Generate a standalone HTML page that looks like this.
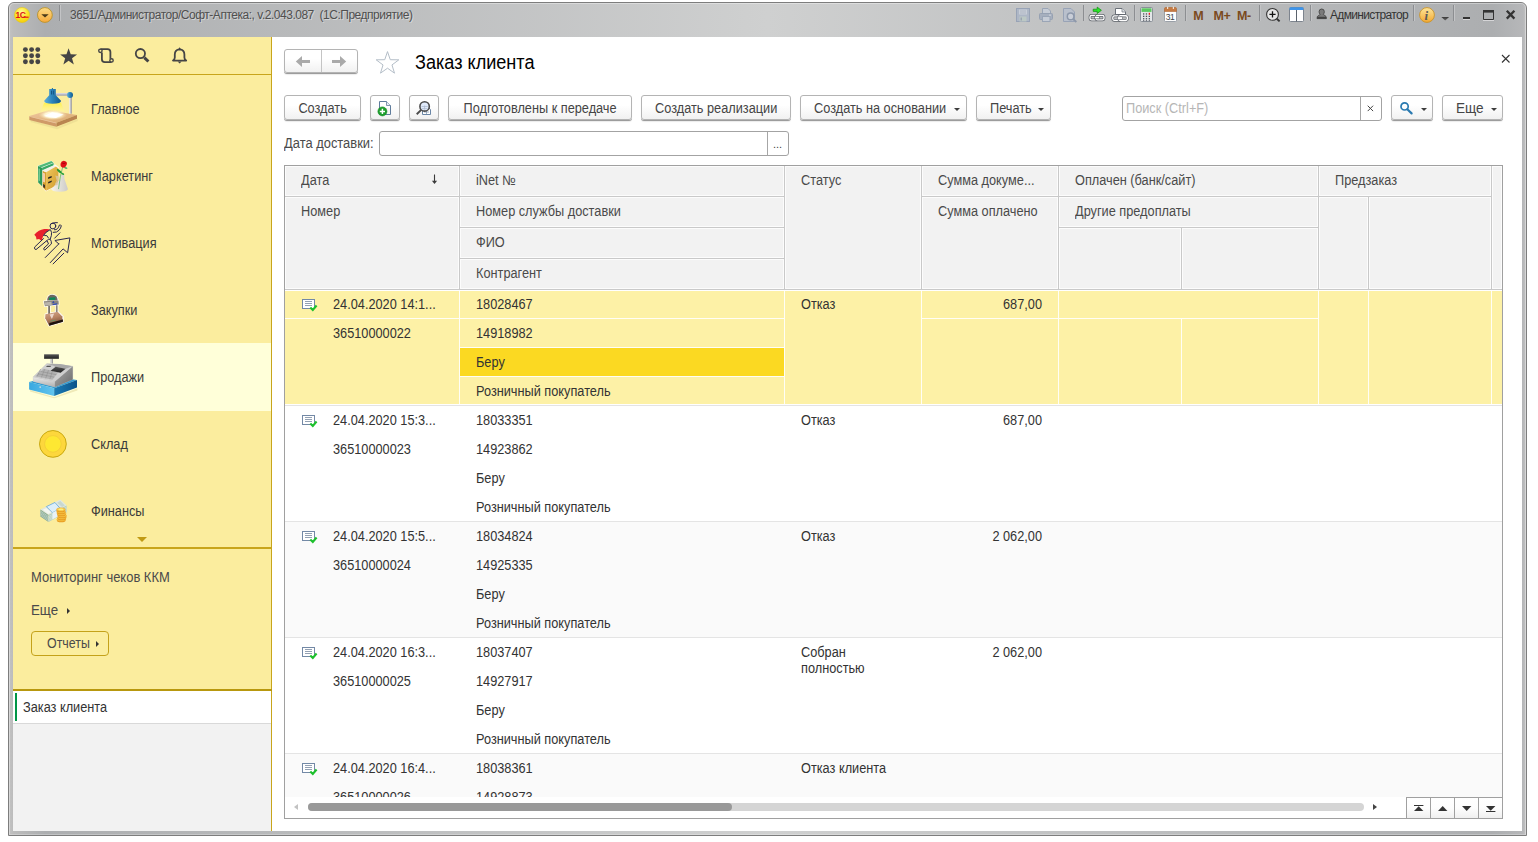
<!DOCTYPE html>
<html lang="ru">
<head>
<meta charset="utf-8">
<title>Заказ клиента</title>
<style>
*{box-sizing:border-box}
html,body{margin:0;padding:0}
body{width:1538px;height:842px;background:#fff;position:relative;overflow:hidden;font-family:"Liberation Sans",sans-serif;font-size:14px;color:#333;letter-spacing:0}
.abs{position:absolute}
#win{position:absolute;left:8px;top:2px;width:1519px;height:834px;border:1px solid #7d7d7d;border-radius:6px 6px 0 0;background:linear-gradient(90deg,#c3c3c3 0,#bcbcbc 4px,#acaeb0 36px,#cfd0d0 50%,#acaeb0 1484px,#b6b7b9 1514px,#c3c3c3 100%)}
#win:before{content:"";position:absolute;left:0;top:0;right:0;bottom:0;border:1px solid rgba(255,255,255,.35);border-radius:5px 5px 0 0;border-bottom-color:rgba(255,255,255,.25)}
#title{position:absolute;left:70px;top:8px;font-size:12px;letter-spacing:-0.48px;color:#4f4f4f;white-space:pre;text-shadow:1px 1px 0 rgba(255,255,255,.4)}
#content{position:absolute;left:13px;top:37px;width:1509px;height:794px;background:#fff}
#main{position:absolute;left:0;top:0;width:1538px;height:842px}
.tri{position:absolute;width:0;height:0;border-top:3px solid transparent;border-bottom:3px solid transparent;border-left:3px solid #333}
/* sidebar */
#side{position:absolute;left:0;top:0;width:259px;height:794px;background:#fbed9e;border-right:1px solid #c8a51b}
#side .hl{position:absolute;left:0;width:258px;height:1px;background:#c8a51b}
.sec{position:absolute;left:0;width:258px;height:67px}
.sec span{position:absolute;left:78px;top:26px;color:#3a3a3a;white-space:nowrap;transform:scaleX(.91);transform-origin:0 0}
.sec.act{background:#ffffd9;height:68px}
.cmd{position:absolute;left:18px;color:#4a4a4a;white-space:nowrap}
.t{position:absolute;white-space:nowrap;transform:scaleX(.91);transform-origin:0 0}
.bt{display:inline-block;transform:scaleX(.91);transform-origin:50% 0}
.bl{display:inline-block;transform:scaleX(.91);transform-origin:0 0}
/* main */
.btn{position:absolute;top:95px;height:25px;border:1px solid #b4b4b4;border-radius:3px;background:linear-gradient(#fff 0,#fff 40%,#f1f1f1 100%);box-shadow:0 1px 0 #9c9c9c,0 2px 1px rgba(0,0,0,.08);color:#454545;text-align:center;line-height:25px;white-space:nowrap;padding:0}
.dd{position:absolute;width:0;height:0;border-left:3px solid transparent;border-right:3px solid transparent;border-top:3px solid #3c3c3c}
.inp{position:absolute;height:25px;border:1px solid #a3a3a3;border-radius:3px;background:#fff}
.hc{position:absolute;background:#f2f2f2;box-shadow:inset 0 0 0 1px #fcfcfc;color:#4a4a4a;white-space:nowrap;overflow:hidden}
.hc span{position:absolute;left:16px;top:6px;transform:scaleX(.91);transform-origin:0 0}
.dt{position:absolute;color:#333;white-space:nowrap;transform:scaleX(.91);transform-origin:0 0}
</style>
</head>
<body>
<div id="win"></div>
<div id="title">3651/Администратор/Софт-Аптека:, v.2.043.087  (1С:Предприятие)</div>
<!--TIS--><svg class="abs" style="left:0;top:0" width="1538" height="37" viewBox="0 0 1538 37"><defs>
<radialGradient id="t1" cx="0.45" cy="0.3" r="0.8"><stop offset="0" stop-color="#fffb9a"/><stop offset="0.5" stop-color="#fce42a"/><stop offset="1" stop-color="#f2c400"/></radialGradient>
<linearGradient id="t2" x1="0" y1="0" x2="0" y2="1"><stop offset="0" stop-color="#fddc86"/><stop offset="1" stop-color="#f7a93a"/></linearGradient>
<linearGradient id="t3" x1="0" y1="0" x2="0" y2="1"><stop offset="0" stop-color="#fde69a"/><stop offset="1" stop-color="#f2a832"/></linearGradient>
<linearGradient id="t4" x1="0" y1="0" x2="0" y2="1"><stop offset="0" stop-color="#3a3a3a"/><stop offset="1" stop-color="#6a6a6a"/></linearGradient>
</defs>
<circle cx="22.1" cy="15" r="7.6" fill="url(#t1)" stroke="#e8c800" stroke-width="0.5"/>
<text x="15.6" y="18.2" font-family="Liberation Sans,sans-serif" font-weight="bold" font-size="8.5" fill="#e0101a" letter-spacing="-0.6">1С</text>
<path d="M23.6 17.2H28.6" stroke="#e0101a" stroke-width="1.1"/>
<circle cx="44.9" cy="15" r="7.4" fill="url(#t2)" stroke="#b8922c" stroke-width="0.9"/>
<path d="M41.3 14.2H48.7L45 17.6Z" fill="#4a3a1a"/>
<rect x="59" y="5" width="1" height="16" fill="#8c8e91"/><rect x="60" y="5" width="1" height="16" fill="#c3c4c6"/>
<!-- disabled save/print/preview -->
<g opacity="1"><rect x="1016.5" y="8.500" width="13" height="13" fill="#aeb7c6" stroke="#98a3b6"/><rect x="1019" y="9.5" width="8" height="5" fill="#c8ced8"/><path d="M1020 11H1026M1020 13H1026" stroke="#aab2c0" stroke-width="0.8"/><rect x="1019.5" y="16.5" width="7" height="5" fill="#bcc8c4"/><rect x="1020.5" y="17.5" width="1.5" height="3" fill="#9aa4b2"/>
<path d="M1042.5 13.5V8.5H1048L1050.5 11V13.5" fill="#c6ccd6" stroke="#9aa5b6"/><rect x="1039.500" y="13.5" width="13" height="6" rx="1" fill="#a6afbe" stroke="#96a1b2"/><rect x="1042.5" y="16.5" width="7.500" height="5" fill="#c6ccd6" stroke="#9aa5b6"/><rect x="1049" y="14.600" width="2" height="1" fill="#d4d8e0"/>
<path d="M1063.5 8.500H1071L1074.500 12V21.500H1063.500Z" fill="#b9c0cc" stroke="#98a3b6"/><circle cx="1070.6" cy="16.4" r="3.3" fill="#c9ced8" stroke="#8d98aa" stroke-width="1.500"/><path d="M1073 19L1076.4 22" stroke="#8d98aa" stroke-width="1.800"/></g>
<rect x="1083" y="5" width="1" height="16" fill="#8c8e91"/><rect x="1084" y="5" width="1" height="16" fill="#c3c4c6"/>
<!-- link with arrow -->
<g><rect x="1090" y="15.400" width="8" height="4.400" rx="1.600" fill="none" stroke="#5c6168" stroke-width="2.700"/><rect x="1090" y="15.400" width="8" height="4.400" rx="1.600" fill="none" stroke="#fff" stroke-width="1.300"/><rect x="1096" y="15.400" width="8" height="4.400" rx="1.600" fill="none" stroke="#5c6168" stroke-width="2.700"/><rect x="1096" y="15.400" width="8" height="4.400" rx="1.600" fill="none" stroke="#fff" stroke-width="1.300"/><rect x="1094.500" y="16.400" width="5" height="2.400" fill="#fff" stroke="#5c6168" stroke-width="0.600"/>
<path d="M1093.200 9.200H1097.200V7.100L1101.400 10.300L1097.200 13.500V11.400H1093.200Z" fill="#2ae82a" stroke="#0c8c0c" stroke-width="0.700"/></g>
<g><path d="M1115.500 14.500V8.500H1122L1125.500 12V14.500Z" fill="#fff" stroke="#6a7078"/><path d="M1122 8.500V12H1125.500" fill="#dfe3e8" stroke="#6a7078" stroke-width="0.700"/><rect x="1112.800" y="15.800" width="8.500" height="4.600" rx="1.600" fill="none" stroke="#5c6168" stroke-width="2.700"/><rect x="1112.800" y="15.800" width="8.500" height="4.600" rx="1.600" fill="none" stroke="#fff" stroke-width="1.300"/><rect x="1118.800" y="15.800" width="8.500" height="4.600" rx="1.600" fill="none" stroke="#5c6168" stroke-width="2.700"/><rect x="1118.800" y="15.800" width="8.500" height="4.600" rx="1.600" fill="none" stroke="#fff" stroke-width="1.500"/><rect x="1117.500" y="16.800" width="5" height="2.600" fill="#fff" stroke="#70757c" stroke-width="0.600"/></g>
<rect x="1134" y="5" width="1" height="16" fill="#8c8e91"/><rect x="1135" y="5" width="1" height="16" fill="#c3c4c6"/>
<!-- calculator -->
<rect x="1140.500" y="7.500" width="12" height="14" rx="1" fill="#e4e6e8" stroke="#8a9098"/><rect x="1141.500" y="8.300" width="10" height="3.600" fill="#5cc860"/><g fill="#4a4e58"><rect x="1143" y="13.300" width="1.300" height="1.300"/><rect x="1145.800" y="13.300" width="1.300" height="1.300"/><rect x="1143" y="15.700" width="1.300" height="1.300"/><rect x="1145.800" y="15.700" width="1.300" height="1.300"/><rect x="1148.700" y="15.700" width="1.300" height="1.300"/><rect x="1143" y="18.100" width="1.300" height="1.300"/><rect x="1145.800" y="18.100" width="1.300" height="1.300"/><rect x="1148.700" y="18.100" width="1.300" height="1.300"/><rect x="1143" y="20.300" width="1.300" height="0.800"/><rect x="1145.800" y="20.300" width="1.300" height="0.800"/><rect x="1148.700" y="20.300" width="1.300" height="0.800"/></g><rect x="1148.700" y="12.800" width="1.300" height="2" fill="#e82020"/>
<!-- calendar -->
<rect x="1164.500" y="8" width="12" height="13.500" rx="1" fill="#fdfdfd" stroke="#9aa0a8"/><path d="M1164.500 11.500V8.800Q1164.500 7.500 1165.800 7.500H1175.200Q1176.500 7.500 1176.500 8.800V11.500Z" fill="#c67a42" stroke="#b06a34" stroke-width="0.6"/><rect x="1167" y="6.600" width="1.200" height="2.400" fill="#f0e0d0"/><rect x="1172.800" y="6.600" width="1.200" height="2.400" fill="#f0e0d0"/>
<text x="1165.800" y="19.700" font-family="Liberation Sans,sans-serif" font-size="8.500" fill="#404650" letter-spacing="-0.5">31</text>
<rect x="1185" y="5" width="1" height="16" fill="#8c8e91"/><rect x="1186" y="5" width="1" height="16" fill="#c3c4c6"/>
<g font-family="Liberation Sans,sans-serif" font-weight="bold" font-size="12.500" fill="#7a4a1e" letter-spacing="-0.4"><text x="1193.300" y="19.700">M</text><text x="1213.600" y="19.700">M+</text><text x="1236.900" y="19.700">M-</text></g>
<rect x="1259" y="5" width="1" height="16" fill="#8c8e91"/><rect x="1260" y="5" width="1" height="16" fill="#c3c4c6"/>
<!-- zoom -->
<circle cx="1272.500" cy="14.400" r="5.900" fill="#e6e6e6" stroke="#333" stroke-width="1.100"/><path d="M1269.400 14.400H1275.600M1272.500 11.300V17.500" stroke="#111" stroke-width="1.300"/><path d="M1276.800 18.800L1279.600 21.400" stroke="#333" stroke-width="1.900"/>
<!-- panels -->
<rect x="1289.500" y="7.500" width="14" height="14" rx="1" fill="#fff" stroke="#7d848e"/><path d="M1289.500 10V8.500Q1289.500 7.200 1290.800 7.200H1302.200Q1303.500 7.200 1303.500 8.500V10Z" fill="#3d94ea"/><path d="M1296.500 10V21.500" stroke="#5a626c" stroke-width="1"/>
<rect x="1310" y="5" width="1" height="16" fill="#8c8e91"/><rect x="1311" y="5" width="1" height="16" fill="#c3c4c6"/>
<!-- user -->
<path d="M1321.700 9Q1324.300 9 1324.300 11.700Q1324.300 13.300 1323.300 14.300Q1323.400 15 1324.900 15.500Q1326.400 16 1326.400 18.600H1317Q1317 16 1318.500 15.500Q1320 15 1320.100 14.300Q1319.100 13.300 1319.100 11.700Q1319.100 9 1321.700 9Z" fill="#7a7a7a" stroke="#444" stroke-width="0.900"/><path d="M1317.200 16.800H1326.200V18.600H1317.200Z" fill="#444"/>
<rect x="1413" y="5" width="1" height="16" fill="#8c8e91"/><rect x="1414" y="5" width="1" height="16" fill="#c3c4c6"/>
<circle cx="1427" cy="15" r="7.400" fill="url(#t3)" stroke="#c8922a" stroke-width="0.900"/>
<text x="1424.600" y="19.600" font-family="Liberation Serif,serif" font-style="italic" font-weight="bold" font-size="13" fill="#5a5a5a">i</text>
<path d="M1441.300 17H1449.100L1445.200 20.600Z" fill="url(#t4)"/>
<rect x="1453" y="5" width="1" height="16" fill="#8c8e91"/><rect x="1454" y="5" width="1" height="16" fill="#c3c4c6"/>
<rect x="1463" y="17" width="7" height="2" fill="#333"/><rect x="1463" y="19" width="7" height="1" fill="#d6d6d8"/>
<path d="M1483.500 11.500H1493.500V19.500H1483.500Z" fill="none" stroke="#333" stroke-width="1"/><rect x="1483" y="10" width="11" height="2.600" fill="#333"/><rect x="1483" y="20" width="11" height="1" fill="#d6d6d8"/>
<path d="M1506.800 10.700L1514.400 18.600M1514.400 10.700L1506.800 18.600" stroke="#333" stroke-width="2.300"/>
</svg>
<div class="abs" style="left:1330px;top:8px;font-size:12px;letter-spacing:-0.66px;color:#333;white-space:nowrap">Администратор</div><!--TIE-->
<div id="content">
<div id="side">
<svg class="abs" style="left:0;top:0" width="258" height="37" viewBox="13 37 258 37"><g fill="#454545"><circle cx="25.4" cy="49.6" r="2.45"/><circle cx="31.6" cy="49.6" r="2.45"/><circle cx="37.8" cy="49.6" r="2.45"/><circle cx="25.4" cy="55.7" r="2.45"/><circle cx="31.6" cy="55.7" r="2.45"/><circle cx="37.8" cy="55.7" r="2.45"/><circle cx="25.4" cy="61.8" r="2.45"/><circle cx="31.6" cy="61.8" r="2.45"/><circle cx="37.8" cy="61.8" r="2.45"/><path d="M68.60 48.30L70.72 54.29L77.06 54.45L72.02 58.31L73.83 64.40L68.60 60.80L63.37 64.40L65.18 58.31L60.14 54.45L66.48 54.29Z"/></g>
<g fill="none" stroke="#454545" stroke-width="1.8"><path d="M100.400 49.100H107.500Q110.400 49.100 110.400 52V58.700"/><path d="M111.500 62.100H104.800Q101.900 62.100 101.900 59.200V52.500"/><circle cx="100.400" cy="50.800" r="1.700" stroke-width="1.400"/><circle cx="111.500" cy="60.400" r="1.700" stroke-width="1.400"/>
<circle cx="140.4" cy="53.6" r="4.6"/><path d="M144.3 57.6L148.4 61.5" stroke-width="3"/>
<path d="M173 60.6H186.2Q184.4 59.6 184.4 57.5V54.6Q184.4 49.6 179.6 49.3Q174.8 49.6 174.8 54.6V57.5Q174.8 59.6 173 60.6Z" stroke-linejoin="round"/></g>
<path d="M178.2 49.2L179.6 47.3L181 49.2ZM177.6 61.6H181.6L179.6 63.6Z" fill="#454545"/></svg>
<div class="hl" style="top:37px"></div>
<div class="sec" style="top:38px"><!--IC0S--><svg class="abs" style="left:7px;top:5px" width="70" height="60" viewBox="20 80 70 60"><defs>
<linearGradient id="l0a" x1="0" y1="0" x2="1" y2="0"><stop offset="0" stop-color="#5fb0dc"/><stop offset="0.45" stop-color="#2d86bd"/><stop offset="1" stop-color="#125a8c"/></linearGradient>
<linearGradient id="l0b" x1="0" y1="0" x2="1" y2="0"><stop offset="0" stop-color="#f4f4f8"/><stop offset="1" stop-color="#8e8e98"/></linearGradient>
<linearGradient id="l0c" x1="0" y1="0" x2="1" y2="1"><stop offset="0" stop-color="#f0c8a0"/><stop offset="1" stop-color="#d8a86c"/></linearGradient>
<radialGradient id="l0d" cx="0.5" cy="0.5" r="0.5"><stop offset="0" stop-color="#fff"/><stop offset="0.55" stop-color="#fff8d8"/><stop offset="1" stop-color="#f4d8a0" stop-opacity="0"/></radialGradient>
<linearGradient id="l0e" x1="0" y1="0" x2="0" y2="1"><stop offset="0" stop-color="#fff04a"/><stop offset="1" stop-color="#fff7a0" stop-opacity="0.5"/></linearGradient></defs>
<polygon points="30.7,119.9 57.1,127.0 77.7,118.8 77.7,121.0 57.1,129.2 30.7,122.1" fill="#e8d890" opacity="0.6"/>
<polygon points="29.3,116.0 48.9,110.3 77.0,114.9 56.4,122.8" fill="url(#l0c)"/>
<polygon points="29.3,116.0 56.4,122.8 56.4,126.7 29.3,119.9" fill="#cf9a68"/>
<polygon points="56.4,122.8 77.0,114.9 77.0,118.8 56.4,126.7" fill="#b98550"/>
<polygon points="29.3,116.0 56.4,122.8 56.4,123.6 29.3,116.8" fill="#edc8a4"/>
<polygon points="44.2,102.7 61.0,102.7 64.5,111.7 40.5,111.7" fill="url(#l0e)"/>
<ellipse cx="52.8" cy="114.9" rx="14.5" ry="5.2" fill="url(#l0d)"/>
<polygon points="44.2,116.0 52.1,112.2 63.6,114.4 55.6,118.1" fill="#fff"/>
<rect x="69.2" y="97.1" width="2.6" height="16.6" fill="url(#l0b)"/>
<rect x="55.6" y="93.0" width="13.6" height="2.4" fill="#d4d4dc"/>
<rect x="55.6" y="94.6" width="13.6" height="0.9" fill="#9090a0"/>
<circle cx="70.0" cy="95.0" r="3" fill="url(#l0a)"/>
<path d="M49.2 89.1H55.8V95.3L61.0 100.7Q61.3 103.5 52.6 103.7Q43.9 103.5 44.2 100.7L49.2 95.3Z" fill="url(#l0a)"/>
<rect x="51.1" y="90.7" width="0.8" height="3.8" fill="#0d4a78"/><rect x="52.9" y="90.7" width="0.8" height="3.8" fill="#0d4a78"/>
<rect x="51.9" y="88.0" width="1" height="1.4" fill="#1a6aa0"/>
</svg><!--IC0E--><span>Главное</span></div>
<div class="sec" style="top:105px"><!--IC1S--><svg class="abs" style="left:7px;top:5px" width="70" height="60" viewBox="20 147 70 60"><defs>
<linearGradient id="l1a" x1="0" y1="0" x2="1" y2="1"><stop offset="0" stop-color="#f0c860"/><stop offset="1" stop-color="#d09a28"/></linearGradient>
<linearGradient id="l1b" x1="0" y1="0" x2="1" y2="0"><stop offset="0" stop-color="#f6f6fa" stop-opacity="0.8"/><stop offset="1" stop-color="#c4c4d0" stop-opacity="0.85"/></linearGradient></defs>
<polygon points="37.7,165.7 51.4,160.7 54.1,163.0 54.1,176.9 42.1,186.6 38.0,182.6" fill="#fff" opacity="0.9"/>
<polygon points="38.0,166.1 42.1,167.8 42.1,186.3 38.2,182.5" fill="#2e9a58"/>
<polygon points="38.0,166.1 51.4,161.1 53.6,163.1 42.1,167.8" fill="#4fba78"/>
<polygon points="41.4,167.3 52.4,163.0 52.9,163.8 42.1,168.1" fill="#f0f4f0"/>
<polygon points="42.1,167.8 53.6,163.1 53.6,176.9 42.1,186.3" fill="#38a864"/>
<polygon points="38.7,168.4 39.7,168.8 39.7,181.2 38.7,180.5" fill="#8fdca8"/>
<polygon points="42.2,170.2 55.3,164.5 58.8,167.3 58.8,184.8 45.8,191.5 42.2,187.8" fill="#fff" opacity="0.9"/>
<polygon points="42.7,170.7 46.1,172.2 46.1,190.8 42.7,187.5" fill="#d8a030"/>
<polygon points="42.7,170.7 54.9,165.2 56.0,166.4 46.1,172.2" fill="#f4f0e4"/>
<polygon points="46.1,172.2 56.0,166.4 58.5,168.4 58.5,184.4 46.1,190.8" fill="url(#l1a)"/>
<polygon points="43.2,172.8 44.8,173.5 44.8,182.6 43.2,181.8" fill="#fbd8c8"/>
<polygon points="43.2,184.1 44.9,184.9 44.9,188.3 43.2,187.1" fill="#2a2a2a"/>
<polygon points="48.2,177.3 51.7,175.9 51.7,177.5 48.2,178.9" fill="#222"/>
<polygon points="48.2,181.9 51.7,180.5 51.7,182.1 48.2,183.6" fill="#222"/>
<path d="M60.8 174.7H64.3V178.4L67.9 189.1Q67.9 191.5 59.9 191.8Q51.1 191.5 51.4 189.1L60.8 178.4Z" fill="url(#l1b)"/>
<polygon points="55.3,175.5 58.8,176.2 57.1,185.5 54.9,184.1 56.7,180.5" fill="#d8c8a8" opacity="0.8"/>
<path d="M62.6 167.3L60.3 176.9L58.5 189.1" stroke="#5cb46c" stroke-width="0.8" fill="none"/>
<ellipse cx="59.2" cy="171.1" rx="2.9" ry="1.1" fill="#1f9a30" transform="rotate(38 59.2 171.1)"/>
<ellipse cx="65.6" cy="167.8" rx="2" ry="0.9" fill="#58b868" transform="rotate(20 65.6 167.8)"/>
<ellipse cx="62.6" cy="173.7" rx="1.8" ry="0.8" fill="#2aa040" transform="rotate(30 62.6 173.7)"/>
<path d="M60.6 163.4Q61.3 160.5 64.5 160.9Q67.8 161.6 66.7 164.8Q65.6 168.0 62.8 167.7Q59.9 166.6 60.6 163.4Z" fill="#e01018"/>
<path d="M62.1 163.0Q64.2 164.5 65.6 162.7" stroke="#a00008" stroke-width="0.8" fill="none"/>
</svg><!--IC1E--><span>Маркетинг</span></div>
<div class="sec" style="top:172px"><!--IC2S--><svg class="abs" style="left:7px;top:5px" width="70" height="60" viewBox="20 214 70 60">
<path d="M34.3 234.7Q38.5 230.0 44.2 229.1Q48.2 228.6 50.3 229.5Q44.9 232.5 43.2 236.1Q42.2 238.6 41.7 240.9L39.1 238.9L36.5 239.5L36.0 236.8Z" fill="#e8202c"/>
<g fill="none" stroke="#28264f" stroke-width="1" stroke-linecap="round" stroke-linejoin="round">
<circle cx="52.9" cy="226.0" r="2.9"/>
<path d="M51.4 223.6Q54.2 222.2 57.4 222.6"/>
<path d="M53.2 232.4Q57.1 232.8 59.2 230.1Q60.9 228.0 61.3 225.8Q60.8 224.4 59.3 225.1Q58.9 227.3 57.5 228.7Q56.1 230.0 54.4 229.8"/>
<path d="M50.6 229.8Q52.1 232.5 51.4 235.4L50.3 238.9"/>
<path d="M49.6 230.0Q44.9 232.2 43.5 235.4"/>
<path d="M44.6 235.4Q47.1 234.3 48.5 237.9"/>
<path d="M43.5 238.6L34.6 247.1Q33.9 249.3 36.0 249.6L46.7 240.7"/>
<path d="M46.7 240.7Q48.5 238.6 50.3 239.3Q51.7 241.4 51.4 243.9L44.9 250.0Q43.2 250.0 43.9 248.1L48.5 243.9L47.4 241.4"/>
<path d="M59.9 232.9L54.6 238.2"/>
<path d="M58.8 243.9L45.3 257.5"/>
<path d="M58.8 243.9L54.9 240.5L69.9 237.9L67.6 252.8L63.1 248.9L50.3 262.6"/>
<path d="M63.8 253.2L53.1 263.9"/>
</g></svg><!--IC2E--><span>Мотивация</span></div>
<div class="sec" style="top:239px"><!--IC3S--><svg class="abs" style="left:7px;top:5px" width="70" height="60" viewBox="20 281 70 60"><defs>
<linearGradient id="l3a" x1="0" y1="0" x2="0.3" y2="1"><stop offset="0" stop-color="#d4a88c"/><stop offset="0.5" stop-color="#b98464"/><stop offset="1" stop-color="#7a5038"/></linearGradient></defs>
<g stroke="#fff" stroke-width="1.6" stroke-linejoin="round" fill="#fff" opacity="0.9">
<path d="M47.1 300.4Q47.4 294.7 52.4 294.7Q57.6 294.9 57.6 300.6Z"/>
<polygon points="43.9,301.3 58.5,300.4 58.8,304.5 44.9,306.3"/>
<rect x="48.2" y="305.9" width="1.8" height="9" />
<rect x="55.9" y="305.2" width="1.7" height="8"/>
<polygon points="45.4,314.2 58.1,311.7 62.9,316.6 62.9,321.8 49.2,325.8 45.2,318.2"/>
</g>
<path d="M47.1 300.4Q47.4 294.7 52.4 294.7Q57.6 294.9 57.6 300.6Z" fill="#6e6862"/>
<polygon points="49.1,297.7 55.3,297.3 55.3,299.7 49.1,300.1" fill="#0d8a58"/>
<polygon points="43.9,301.3 58.5,300.4 58.8,304.5 44.9,306.3" fill="#8a857e"/>
<polygon points="44.6,302.4 51.4,301.8 51.7,304.9 45.3,305.6" fill="#b8b4ac"/>
<polygon points="52.2,302.7 53.4,301.1 54.5,302.7" fill="#1838c0"/>
<polygon points="52.9,304.0 57.1,303.2 57.1,304.4 52.9,304.9" fill="#2848c8"/>
<rect x="48.2" y="305.9" width="1.8" height="10" fill="#7a746c"/>
<rect x="55.9" y="305.2" width="1.7" height="9" fill="#8a847c"/>
<polygon points="45.4,314.2 58.1,311.7 62.9,316.6 62.9,321.8 49.2,325.8 45.2,318.2" fill="url(#l3a)"/>
<polygon points="49.6,314.5 54.2,313.5 51.9,319.1" fill="#f4e4dc" opacity="0.85"/>
<path d="M58.1 311.9L62.6 316.6L62.6 319.5" stroke="#fff" stroke-width="0.7" fill="none" opacity="0.9"/>
<polygon points="49.4,322.9 62.9,319.5 62.9,321.8 49.2,325.8" fill="#1c130d"/>
<polygon points="50.3,321.1 55.6,319.7 55.6,320.4 50.3,321.8" fill="#58a070"/>
</svg><!--IC3E--><span>Закупки</span></div>
<div class="sec act" style="top:306px"><!--IC4S--><svg class="abs" style="left:7px;top:5px" width="70" height="60" viewBox="20 348 70 60"><defs>
<linearGradient id="l4a" x1="0" y1="0" x2="1" y2="0"><stop offset="0" stop-color="#3aa8e0"/><stop offset="1" stop-color="#62c4ee"/></linearGradient>
<linearGradient id="l4b" x1="0" y1="0" x2="1" y2="0"><stop offset="0" stop-color="#1c7cb6"/><stop offset="1" stop-color="#0b548a"/></linearGradient>
<linearGradient id="l4c" x1="0" y1="0" x2="1" y2="1"><stop offset="0" stop-color="#adadad"/><stop offset="1" stop-color="#6a6a6a"/></linearGradient>
<linearGradient id="l4d" x1="0" y1="0" x2="0" y2="1"><stop offset="0" stop-color="#e8e8e8"/><stop offset="1" stop-color="#b0b0b0"/></linearGradient>
<linearGradient id="l4e" x1="0" y1="0" x2="0" y2="1"><stop offset="0" stop-color="#555"/><stop offset="1" stop-color="#222"/></linearGradient></defs>
<polygon points="30.0,390.1 54.2,397.2 77.4,388.3 77.4,390.4 54.2,398.2 30.0,391.5" fill="#e8e0a8" opacity="0.7"/>
<polygon points="29.1,381.9 52.1,376.2 77.0,380.1 54.2,388.3" fill="#2f9ad4"/>
<polygon points="29.1,381.9 54.2,388.3 54.2,396.1 29.1,389.5" fill="url(#l4a)"/>
<polygon points="54.2,388.3 77.0,380.1 77.0,387.6 54.2,396.1" fill="url(#l4b)"/>
<circle cx="40.2" cy="387.1" r="0.9" fill="#c8d8e0"/>
<polygon points="33.2,376.9 46.7,363.8 72.7,366.2 72.7,379.4 54.9,387.1 33.2,381.4" fill="#bdbdbd" stroke="#bdbdbd" stroke-width="0.3"/>
<polygon points="33.2,376.9 54.9,381.5 54.9,387.1 33.2,381.4" fill="url(#l4d)"/>
<polygon points="54.9,381.5 72.7,366.2 72.7,379.4 54.9,387.1" fill="url(#l4c)"/>
<polygon points="33.2,376.9 46.7,363.8 59.9,364.0 72.7,366.2 54.9,381.5" fill="#cfcfcf"/>
<polygon points="46.7,363.8 59.9,364.0 72.7,366.2 65.6,368.7 56.0,366.9 53.5,365.8" fill="#a8a8a8"/>
<polygon points="35.3,376.2 43.5,368.7 58.5,371.9 52.4,379.7" fill="#b2b2b2"/>
<g stroke="#8c8c8c" stroke-width="0.55" fill="none"><path d="M37.8 373.7L54.2 377.2M40.3 371.4L56.4 374.7M40.7 369.0L37.1 376.5M44.6 369.4L41.4 377.4M48.5 370.2L45.7 378.3M52.4 371.0L49.9 379.1"/></g>
<polygon points="50.6,370.7 55.6,366.7 65.6,368.8 60.6,372.8" fill="url(#l4e)"/>
<polygon points="47.1,365.8 51.4,365.7 50.3,367.1 46.0,367.1" fill="#555"/>
<rect x="50.3" y="358.7" width="2.7" height="4.8" fill="#d0d0d0"/>
<rect x="51.9" y="358.7" width="1" height="4.8" fill="#9a9a9a"/>
<rect x="44.1" y="354.3" width="14.8" height="4.5" fill="url(#l4e)"/>
</svg><!--IC4E--><span>Продажи</span></div>
<div class="sec" style="top:373px"><!--IC5S--><svg class="abs" style="left:7px;top:5px" width="70" height="60" viewBox="20 415 70 60"><circle cx="52.9" cy="443.9" r="13.4" fill="#fdd73c" stroke="#c2a208" stroke-width="0.9"/><circle cx="52.9" cy="443.9" r="8.3" fill="#fee832" stroke="#f0c838" stroke-width="0.7"/></svg><!--IC5E--><span>Склад</span></div>
<div class="sec" style="top:440px"><!--IC6S--><svg class="abs" style="left:7px;top:5px" width="70" height="60" viewBox="20 482 70 60">
<polygon points="40.3,509.4 60.3,499.5 66.7,505.5 48.5,515.1" fill="#dfe8e2"/>
<polygon points="40.3,509.4 48.5,515.1 48.5,521.9 40.3,516.4" fill="#86aa94"/>
<polygon points="48.5,515.1 66.7,505.5 66.7,512.3 48.5,521.9" fill="#b4cfc0"/>
<g stroke="#e8f0ea" stroke-width="0.45" fill="none"><path d="M40.3 510.9L48.5 516.6L66.7 506.9M40.3 512.3L48.5 518.0L66.7 508.4M40.3 513.7L48.5 519.4L66.7 509.8M40.3 515.1L48.5 520.8L66.7 511.2"/></g>
<polygon points="46.4,506.6 54.9,502.5 60.3,508.5 52.4,512.8" fill="#dceefa" stroke="#3a90d0" stroke-width="0.6"/>
<polygon points="52.4,512.8 60.3,508.5 60.3,515.1 52.4,519.6" fill="#e8f2f8"/>
<polygon points="42.8,509.8 46.4,508.0 51.4,512.3 48.2,514.1" fill="#f4f6f0"/>
<polygon points="57.1,502.7 60.3,501.1 64.9,505.5 62.1,507.1" fill="#c8d8d0"/>
<ellipse cx="61.2" cy="520.4" rx="4.4" ry="1.8" fill="#e89a20"/><ellipse cx="61.2" cy="519.4" rx="4.4" ry="1.8" fill="#f8c848" stroke="#e8a020" stroke-width="0.4"/><ellipse cx="61.8" cy="518.5" rx="4.4" ry="1.8" fill="#e89a20"/><ellipse cx="61.8" cy="517.5" rx="4.4" ry="1.8" fill="#f8c848" stroke="#e8a020" stroke-width="0.4"/><ellipse cx="62.1" cy="516.5" rx="4.4" ry="1.8" fill="#e89a20"/><ellipse cx="62.1" cy="515.5" rx="4.4" ry="1.8" fill="#f8c848" stroke="#e8a020" stroke-width="0.4"/><ellipse cx="61.5" cy="514.5" rx="4.4" ry="1.8" fill="#e89a20"/><ellipse cx="61.5" cy="513.5" rx="4.4" ry="1.8" fill="#f8c848" stroke="#e8a020" stroke-width="0.4"/><ellipse cx="61.1" cy="512.5" rx="4.4" ry="1.8" fill="#e89a20"/><ellipse cx="61.1" cy="511.5" rx="4.4" ry="1.8" fill="#f8c848" stroke="#e8a020" stroke-width="0.4"/><ellipse cx="60.9" cy="510.5" rx="4.4" ry="1.8" fill="#e89a20"/><ellipse cx="60.9" cy="509.5" rx="4.4" ry="1.8" fill="#f8c848" stroke="#e8a020" stroke-width="0.4"/>
<ellipse cx="60.9" cy="509.4" rx="2.6" ry="0.9" fill="#fcf080"/>
</svg><!--IC6E--><span>Финансы</span></div>
<div class="abs" style="left:124px;top:500px;width:0;height:0;border-left:5px solid transparent;border-right:5px solid transparent;border-top:5px solid #c09a14"></div>
<div class="hl" style="top:510px;height:2px"></div>
<div class="cmd" style="top:532px"><span class="t" style="left:0;top:0;transform:scaleX(.925)">Мониторинг чеков ККМ</span></div>
<div class="cmd" style="top:565px"><span class="t" style="left:0;top:0;transform:scaleX(.95)">Еще</span><i class="tri" style="left:36px;top:6px"></i></div>
<div class="abs" style="left:18px;top:594px;width:78px;height:25px;border:1px solid #c4a21a;border-radius:4px;background:#fbee9f"><span class="t" style="left:15px;top:3px;color:#4a4a4a;transform:scaleX(.885)">Отчеты</span><i class="tri" style="left:64px;top:9px"></i></div>
<div class="hl" style="top:652px;height:2px;background:#b8980e;width:259px"></div>
<div class="abs" style="left:0;top:654px;width:258px;height:140px;background:#f2f2f2">
<div class="abs" style="left:0;top:0;width:258px;height:33px;background:#fff;border-bottom:1px solid #d9d9d9"><div class="abs" style="left:2px;top:2px;width:2px;height:28px;background:#009646"></div><span class="t" style="left:10px;top:8px;color:#333">Заказ клиента</span></div>
</div>
</div>
</div>
<div id="main">
<!-- nav -->
<div class="btn" style="left:284px;top:49px;width:74px;height:24px"><div class="abs" style="left:36px;top:0;width:1px;height:22px;background:#c4c4c4"></div>
<svg class="abs" style="left:0;top:0" width="72" height="22" viewBox="285 50 72 22"><g fill="#aaa"><path d="M295.8 61.5L302 56V60H310V63H302V67Z"/><path d="M346.2 61.5L340 56V60H332V63H340V67Z"/></g></svg></div>
<svg class="abs" style="left:374px;top:49px" width="28" height="26" viewBox="374 49 28 26"><path d="M387.50 51.60L390.26 59.70L398.82 59.82L391.97 64.95L394.49 73.13L387.50 68.20L380.51 73.13L383.03 64.95L376.18 59.82L384.74 59.70Z" fill="#fff" stroke="#b4bec8" stroke-width="1"/></svg>
<div class="abs" style="left:415px;top:51px;font-size:20px;color:#000;letter-spacing:0;transform:scaleX(0.905);transform-origin:0 0;white-space:nowrap">Заказ клиента</div>
<svg class="abs" style="left:1500px;top:53px" width="12" height="12" viewBox="0 0 12 12"><path d="M2 2L9.5 9.5M9.5 2L2 9.5" stroke="#333" stroke-width="1.1" fill="none"/></svg>
<!-- toolbar -->
<div class="btn" style="left:284px;width:77px"><span class="bt">Создать</span></div>
<div class="btn" style="left:370px;width:30px"><svg class="abs" style="left:0;top:0" width="28" height="23" viewBox="371 96 28 23"><path d="M379.500 101.500H386.500L390.500 105.500V114.500H379.500Z" fill="#fff" stroke="#5f7c9c"/><path d="M386.500 101.500V105.500H390.500" fill="#e8eef4" stroke="#5f7c9c" stroke-width="0.800"/><path d="M384 108H390V114H384Z" fill="#f0f0f0" opacity="0.6"/><circle cx="382.400" cy="111.400" r="4.500" fill="#1d9e2c" stroke="#0f8a1e" stroke-width="0.600"/><path d="M379.800 111.400H385M382.400 108.800V114" stroke="#fff" stroke-width="1.500"/></svg></div>
<div class="btn" style="left:409px;width:30px"><svg class="abs" style="left:0;top:0" width="28" height="23" viewBox="410 96 28 23"><path d="M422.500 108V114.500H430.500V109.500L428.500 107.500" fill="#fff" stroke="#6a86a6"/><path d="M424 112H429M426.500 110V114" stroke="#8aa0b8" stroke-width="0.800"/><circle cx="424.600" cy="106.400" r="4.700" fill="#e0eafa" stroke="#4b4b4b" stroke-width="1.600"/><path d="M421.500 106.500H427.700M421.800 108.600H427.400M424.600 105.500V109.600" stroke="#a8b6cc" stroke-width="0.700"/><path d="M421.200 109.900L416.700 114.300" stroke="#4b4b4b" stroke-width="1.900"/></svg></div>
<div class="btn" style="left:448px;width:184px"><span class="bt">Подготовлены к передаче</span></div>
<div class="btn" style="left:641px;width:150px"><span class="bt">Создать реализации</span></div>
<div class="btn" style="left:800px;width:167px;text-align:left;padding-left:13px"><span class="bl">Создать на основании</span><i class="dd" style="left:153px;top:12px"></i></div>
<div class="btn" style="left:976px;width:75px;text-align:left;padding-left:13px"><span class="bl">Печать</span><i class="dd" style="left:61px;top:12px"></i></div>
<div class="inp" style="left:1122px;top:96px;width:260px"><span class="t" style="left:3px;top:3px;color:#b6b6b6">Поиск (Ctrl+F)</span><div class="abs" style="left:237px;top:0;width:1px;height:23px;background:#a6a6a6"></div><svg class="abs" style="left:243px;top:7px" width="9" height="9" viewBox="0 0 9 9"><path d="M1.700 1.700L7.100 7.100M7.100 1.700L1.700 7.100" stroke="#444" stroke-width="1" fill="none"/></svg></div>
<div class="btn" style="left:1391px;width:42px"><svg class="abs" style="left:6px;top:4px" width="18" height="16" viewBox="0 0 18 16"><circle cx="6.6" cy="6.4" r="3.6" fill="none" stroke="#2a7ab0" stroke-width="1.7"/><path d="M9.3 9.3L13.6 13.4" stroke="#2a7ab0" stroke-width="2.2" stroke-linecap="round"/></svg><i class="dd" style="left:29px;top:12px"></i></div>
<div class="btn" style="left:1442px;width:61px;text-align:left;padding-left:13px"><span class="bl" style="transform:scaleX(.97)">Еще</span><i class="dd" style="left:48px;top:12px"></i></div>
<!-- date field -->
<div class="t" style="left:284px;top:135px;color:#4a4a4a;transform:scaleX(.922)">Дата доставки:</div>
<div class="inp" style="left:379px;top:131px;width:410px"><div class="abs" style="left:387px;top:0;width:1px;height:23px;background:#a6a6a6"></div><span class="abs" style="left:393px;top:6px;font-size:11px;color:#444;letter-spacing:0">...</span></div>

<!--TABLE_START-->
<div class="abs" style="left:284px;top:165px;width:1219px;height:654px;border:1px solid #a0a0a0;background:#fff"></div>
<div class="abs" style="left:285px;top:166px;width:1217px;height:124px;background:#c9c9c9"></div>
<div class="abs" style="left:285px;top:290px;width:1217px;height:1px;background:#fff"></div>
<div class="hc" style="left:285px;top:166px;width:174px;height:30px"><span>Дата</span><svg class="abs" style="left:145px;top:8px" width="9" height="12" viewBox="0 0 9 12"><path d="M4.500 0.500V8" stroke="#3a3a3a" stroke-width="1.100" fill="none"/><path d="M1.900 6.800H7.100L4.500 10Z" fill="#3a3a3a"/></svg></div>
<div class="hc" style="left:285px;top:197px;width:174px;height:92px"><span>Номер</span></div>
<div class="hc" style="left:460px;top:166px;width:324px;height:30px"><span>iNet №</span></div>
<div class="hc" style="left:460px;top:197px;width:324px;height:30px"><span>Номер службы доставки</span></div>
<div class="hc" style="left:460px;top:228px;width:324px;height:30px"><span>ФИО</span></div>
<div class="hc" style="left:460px;top:259px;width:324px;height:30px"><span>Контрагент</span></div>
<div class="hc" style="left:785px;top:166px;width:136px;height:123px"><span>Статус</span></div>
<div class="hc" style="left:922px;top:166px;width:136px;height:30px"><span>Сумма докуме...</span></div>
<div class="hc" style="left:922px;top:197px;width:136px;height:92px"><span>Сумма оплачено</span></div>
<div class="hc" style="left:1059px;top:166px;width:259px;height:30px"><span>Оплачен (банк/сайт)</span></div>
<div class="hc" style="left:1059px;top:197px;width:259px;height:30px"><span>Другие предоплаты</span></div>
<div class="hc" style="left:1059px;top:228px;width:122px;height:61px"></div>
<div class="hc" style="left:1182px;top:228px;width:136px;height:61px"></div>
<div class="hc" style="left:1319px;top:166px;width:172px;height:30px"><span>Предзаказ</span></div>
<div class="hc" style="left:1319px;top:197px;width:49px;height:92px"></div>
<div class="hc" style="left:1369px;top:197px;width:122px;height:92px"></div>
<div class="hc" style="left:1492px;top:166px;width:10px;height:123px"></div>
<div class="abs" style="left:285px;top:290px;width:1217px;height:507px;overflow:hidden">
<div class="abs" style="left:0;top:0px;width:1217px;height:116px;background:#fff;border-bottom:1px solid #e4e4e4">
<div class="abs" style="left:0;top:1px;width:1217px;height:113px;background:#fffef6"></div>
<div class="abs" style="left:0px;top:1px;width:174px;height:27px;background:#fdf1a6"></div>
<div class="abs" style="left:0px;top:29px;width:174px;height:85px;background:#fdf1a6"></div>
<div class="abs" style="left:175px;top:1px;width:324px;height:27px;background:#fdf1a6"></div>
<div class="abs" style="left:175px;top:29px;width:324px;height:28px;background:#fdf1a6"></div>
<div class="abs" style="left:175px;top:58px;width:324px;height:28px;background:#fbd922"></div>
<div class="abs" style="left:175px;top:87px;width:324px;height:27px;background:#fdf1a6"></div>
<div class="abs" style="left:500px;top:1px;width:136px;height:113px;background:#fdf1a6"></div>
<div class="abs" style="left:637px;top:1px;width:136px;height:27px;background:#fdf1a6"></div>
<div class="abs" style="left:637px;top:29px;width:136px;height:85px;background:#fdf1a6"></div>
<div class="abs" style="left:774px;top:1px;width:259px;height:27px;background:#fdf1a6"></div>
<div class="abs" style="left:774px;top:29px;width:122px;height:85px;background:#fdf1a6"></div>
<div class="abs" style="left:897px;top:29px;width:136px;height:85px;background:#fdf1a6"></div>
<div class="abs" style="left:1034px;top:1px;width:49px;height:113px;background:#fdf1a6"></div>
<div class="abs" style="left:1084px;top:1px;width:122px;height:113px;background:#fdf1a6"></div>
<div class="abs" style="left:1207px;top:1px;width:10px;height:113px;background:#fdf1a6"></div>
<svg class="abs" style="left:17px;top:9px" width="17" height="14" viewBox="0 0 17 14"><rect x="0.5" y="0.5" width="12" height="9" fill="#fff" stroke="#7389a6"/><path d="M3 2.5H10M3 4.5H10M3 6.5H10" stroke="#93a1b3" stroke-width="1"/><path d="M8.300 8.500L10.800 11L14.600 6.500" stroke="#1dc12c" stroke-width="2.100" fill="none"/></svg>
<span class="dt" style="left:48px;top:6px">24.04.2020 14:1...</span>
<span class="dt" style="left:48px;top:35px">36510000022</span>
<span class="dt" style="left:191px;top:6px">18028467</span>
<span class="dt" style="left:191px;top:35px">14918982</span>
<span class="dt" style="left:191px;top:64px">Беру</span>
<span class="dt" style="left:191px;top:93px">Розничный покупатель</span>
<span class="dt" style="left:516px;top:6px;line-height:16px">Отказ</span>
<span class="dt" style="left:637px;top:6px;width:120px;text-align:right;transform-origin:100% 0">687,00</span>
</div>
<div class="abs" style="left:0;top:116px;width:1217px;height:116px;background:#fff;border-bottom:1px solid #e4e4e4">
<svg class="abs" style="left:17px;top:9px" width="17" height="14" viewBox="0 0 17 14"><rect x="0.5" y="0.5" width="12" height="9" fill="#fff" stroke="#7389a6"/><path d="M3 2.5H10M3 4.5H10M3 6.5H10" stroke="#93a1b3" stroke-width="1"/><path d="M8.300 8.500L10.800 11L14.600 6.500" stroke="#1dc12c" stroke-width="2.100" fill="none"/></svg>
<span class="dt" style="left:48px;top:6px">24.04.2020 15:3...</span>
<span class="dt" style="left:48px;top:35px">36510000023</span>
<span class="dt" style="left:191px;top:6px">18033351</span>
<span class="dt" style="left:191px;top:35px">14923862</span>
<span class="dt" style="left:191px;top:64px">Беру</span>
<span class="dt" style="left:191px;top:93px">Розничный покупатель</span>
<span class="dt" style="left:516px;top:6px;line-height:16px">Отказ</span>
<span class="dt" style="left:637px;top:6px;width:120px;text-align:right;transform-origin:100% 0">687,00</span>
</div>
<div class="abs" style="left:0;top:232px;width:1217px;height:116px;background:#fafafa;border-bottom:1px solid #e4e4e4">
<svg class="abs" style="left:17px;top:9px" width="17" height="14" viewBox="0 0 17 14"><rect x="0.5" y="0.5" width="12" height="9" fill="#fff" stroke="#7389a6"/><path d="M3 2.5H10M3 4.5H10M3 6.5H10" stroke="#93a1b3" stroke-width="1"/><path d="M8.300 8.500L10.800 11L14.600 6.500" stroke="#1dc12c" stroke-width="2.100" fill="none"/></svg>
<span class="dt" style="left:48px;top:6px">24.04.2020 15:5...</span>
<span class="dt" style="left:48px;top:35px">36510000024</span>
<span class="dt" style="left:191px;top:6px">18034824</span>
<span class="dt" style="left:191px;top:35px">14925335</span>
<span class="dt" style="left:191px;top:64px">Беру</span>
<span class="dt" style="left:191px;top:93px">Розничный покупатель</span>
<span class="dt" style="left:516px;top:6px;line-height:16px">Отказ</span>
<span class="dt" style="left:637px;top:6px;width:120px;text-align:right;transform-origin:100% 0">2 062,00</span>
</div>
<div class="abs" style="left:0;top:348px;width:1217px;height:116px;background:#fff;border-bottom:1px solid #e4e4e4">
<svg class="abs" style="left:17px;top:9px" width="17" height="14" viewBox="0 0 17 14"><rect x="0.5" y="0.5" width="12" height="9" fill="#fff" stroke="#7389a6"/><path d="M3 2.5H10M3 4.5H10M3 6.5H10" stroke="#93a1b3" stroke-width="1"/><path d="M8.300 8.500L10.800 11L14.600 6.500" stroke="#1dc12c" stroke-width="2.100" fill="none"/></svg>
<span class="dt" style="left:48px;top:6px">24.04.2020 16:3...</span>
<span class="dt" style="left:48px;top:35px">36510000025</span>
<span class="dt" style="left:191px;top:6px">18037407</span>
<span class="dt" style="left:191px;top:35px">14927917</span>
<span class="dt" style="left:191px;top:64px">Беру</span>
<span class="dt" style="left:191px;top:93px">Розничный покупатель</span>
<span class="dt" style="left:516px;top:6px;line-height:16px">Собран<br>полностью</span>
<span class="dt" style="left:637px;top:6px;width:120px;text-align:right;transform-origin:100% 0">2 062,00</span>
</div>
<div class="abs" style="left:0;top:464px;width:1217px;height:116px;background:#fafafa;border-bottom:1px solid #e4e4e4">
<svg class="abs" style="left:17px;top:9px" width="17" height="14" viewBox="0 0 17 14"><rect x="0.5" y="0.5" width="12" height="9" fill="#fff" stroke="#7389a6"/><path d="M3 2.5H10M3 4.5H10M3 6.5H10" stroke="#93a1b3" stroke-width="1"/><path d="M8.300 8.500L10.800 11L14.600 6.500" stroke="#1dc12c" stroke-width="2.100" fill="none"/></svg>
<span class="dt" style="left:48px;top:6px">24.04.2020 16:4...</span>
<span class="dt" style="left:48px;top:35px">36510000026</span>
<span class="dt" style="left:191px;top:6px">18038361</span>
<span class="dt" style="left:191px;top:35px">14928873</span>
<span class="dt" style="left:191px;top:64px">Беру</span>
<span class="dt" style="left:191px;top:93px">Розничный покупатель</span>
<span class="dt" style="left:516px;top:6px;line-height:16px">Отказ клиента</span>
</div>
</div>
<div class="abs" style="left:308px;top:803px;width:1056px;height:8px;border-radius:4px;background:#d5d5d5"></div>
<div class="abs" style="left:308px;top:803px;width:424px;height:8px;border-radius:4px;background:#999"></div>
<div class="abs" style="left:294px;top:804px;width:0;height:0;border-top:3px solid transparent;border-bottom:3px solid transparent;border-right:4px solid #c2c2c2"></div>
<div class="abs" style="left:1373px;top:804px;width:0;height:0;border-top:3px solid transparent;border-bottom:3px solid transparent;border-left:4px solid #444"></div>
<svg class="abs" style="left:1406px;top:797px" width="97" height="22" viewBox="1406 797 97 22"><defs><linearGradient id="nbg" x1="0" y1="0" x2="0" y2="1"><stop offset="0" stop-color="#fff"/><stop offset="0.5" stop-color="#fdfdfd"/><stop offset="1" stop-color="#efefef"/></linearGradient></defs><rect x="1406.5" y="797.5" width="96" height="21" fill="url(#nbg)" stroke="#a0a0a0"/><path d="M1430.5 798V818M1454.5 798V818M1478.5 798V818" stroke="#a0a0a0"/><g fill="#333"><rect x="1414" y="805" width="9.4" height="1"/><path d="M1414 811H1423.4L1418.7 806.2Z"/><path d="M1438 811H1447.4L1442.7 806Z"/><path d="M1462 806H1471.4L1466.7 811Z"/><path d="M1486 806H1495.4L1490.7 810.8Z"/><rect x="1486" y="811" width="9.4" height="1"/></g></svg>
<!--TABLE_END-->
</div>
</body>
</html>
